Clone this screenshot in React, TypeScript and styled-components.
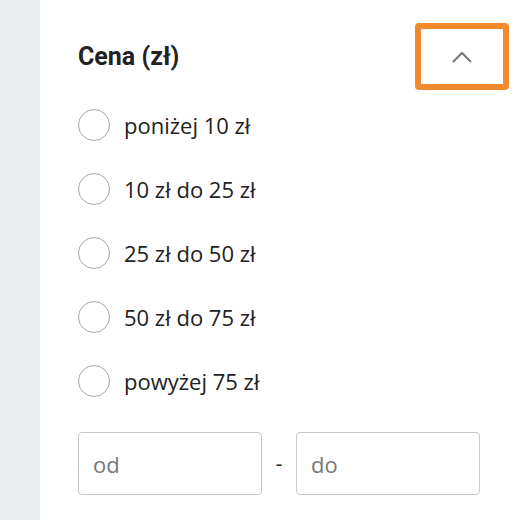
import React from 'react';
import styled, { createGlobalStyle } from 'styled-components';

const GlobalStyle = createGlobalStyle`
  html, body {
    margin: 0;
    padding: 0;
    background: #fff;
  }
  body {
    font-family: "Open Sans", "Liberation Sans", sans-serif;
    color: #222;
  }
`;

const Page = styled.div`
  display: flex;
  width: 516px;
  height: 520px;
  overflow: hidden;
`;

const Sidebar = styled.div`
  width: 40px;
  flex-shrink: 0;
  background: #ebeef1;
`;

const Panel = styled.div`
  flex: 1;
  padding: 23px 7px 0 38px;
`;

const Header = styled.div`
  display: flex;
  align-items: center;
  justify-content: space-between;
`;

const Title = styled.h3`
  margin: 0;
  font-family: Roboto, "Liberation Sans", sans-serif;
  font-weight: 700;
  font-size: 25px;
  color: #222;
`;

const ToggleButton = styled.button`
  width: 94px;
  height: 67px;
  display: flex;
  align-items: center;
  justify-content: center;
  background: #fff;
  border: 6px solid #f08a2c;
  border-radius: 4px;
  padding: 0;
  cursor: pointer;
`;

const Options = styled.ul`
  list-style: none;
  margin: 3px 0 0;
  padding: 0;
`;

const Option = styled.li`
  display: flex;
  align-items: center;
  gap: 14px;
  height: 64px;
  font-size: 22px;
  color: #222;
`;

const Radio = styled.span`
  width: 30px;
  height: 30px;
  border: 1px solid #a9a9a9;
  border-radius: 50%;
  flex-shrink: 0;
`;

const RangeRow = styled.div`
  display: flex;
  align-items: center;
  margin-top: 19px;
`;

const RangeInput = styled.input`
  width: 184px;
  height: 63px;
  box-sizing: border-box;
  border: 1px solid #c9c9c9;
  border-radius: 4px;
  padding: 0 14px;
  font-family: "Open Sans", "Liberation Sans", sans-serif;
  font-size: 22px;
  color: #222;
  outline: none;

  &::placeholder {
    color: #777;
  }
`;

const Dash = styled.span`
  width: 34px;
  text-align: center;
  font-size: 22px;
  color: #333;
  margin-top: -4px;
`;

const prices = ['poniżej 10 zł', '10 zł do 25 zł', '25 zł do 50 zł', '50 zł do 75 zł', 'powyżej 75 zł'];

export default function App() {
  return (
    <>
      <GlobalStyle />
      <Page>
        <Sidebar />
        <Panel>
          <Header>
            <Title>Cena (zł)</Title>
            <ToggleButton aria-label="Zwiń">
              <svg width="22" height="14" viewBox="0 0 22 14" fill="none">
                <path d="M2 12 L11 3 L20 12" stroke="#777" strokeWidth="2" />
              </svg>
            </ToggleButton>
          </Header>
          <Options>
            {prices.map((p) => (
              <Option key={p}>
                <Radio />
                {p}
              </Option>
            ))}
          </Options>
          <RangeRow>
            <RangeInput placeholder="od" />
            <Dash>-</Dash>
            <RangeInput placeholder="do" />
          </RangeRow>
        </Panel>
      </Page>
    </>
  );
}
